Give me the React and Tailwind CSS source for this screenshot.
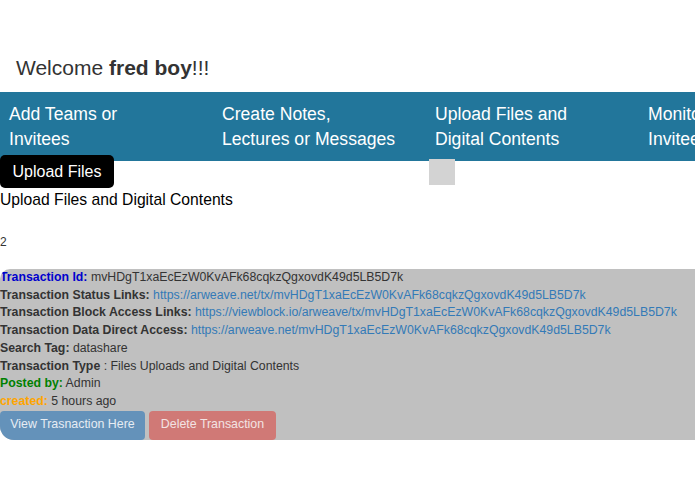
const tx = 'mvHDgT1xaEcEzW0KvAFk68cqkzQgxovdK49d5LB5D7k';

const navItems = [
  ['Add Teams or', 'Invitees'],
  ['Create Notes,', 'Lectures or Messages'],
  ['Upload Files and', 'Digital Contents'],
  ['Monitor', 'Invitees'],
];

export default function App() {
  return (
    <div className="min-h-screen overflow-hidden bg-white text-[#333] font-['Liberation_Sans',Arial,sans-serif]">
      <h1 className="pl-4 pt-[54px] pb-[10px] text-[21px] leading-[28px]">
        Welcome <b>fred boy</b>!!!
      </h1>

      <nav className="flex bg-[#22769b] py-[10px] text-[17.6px] leading-[24.5px] text-white whitespace-nowrap">
        {navItems.map(([a, b]) => (
          <div key={a} className="w-[213px] shrink-0 pl-[9px]">
            <div>{a}</div>
            <div>{b}</div>
          </div>
        ))}
      </nav>

      <div className="-mt-[6px] flex items-center">
        <button className="h-[33px] w-[114px] rounded-[5px] bg-black text-[16px] text-white">Upload Files</button>
        <div className="ml-[315px] h-[26px] w-[26px] bg-[#d3d3d3]" />
      </div>

      <p className="mt-[2px] text-[15.7px] leading-[20px] text-black">Upload Files and Digital Contents</p>

      <p className="mt-[24px] text-[12px] leading-[16px]">2</p>

      <div className="mt-[19px] w-[720px] overflow-hidden rounded-tl-[10px] rounded-bl-[14px] bg-[#c0c0c0] text-[12.3px] leading-[17.7px] text-[#333]">
        <div><b className="text-[#0000cd]">Transaction Id:</b> {tx}</div>
        <div><b>Transaction Status Links:</b> <a className="text-[#337ab7]">https://arweave.net/tx/{tx}</a></div>
        <div><b>Transaction Block Access Links:</b> <a className="text-[#337ab7]">https://viewblock.io/arweave/tx/{tx}</a></div>
        <div><b>Transaction Data Direct Access:</b> <a className="text-[#337ab7]">https://arweave.net/{tx}</a></div>
        <div><b>Search Tag:</b> datashare</div>
        <div><b>Transaction Type</b> : Files Uploads and Digital Contents</div>
        <div><b className="text-[#008000]">Posted by:</b> Admin</div>
        <div><b className="text-[#ffa500]">created:</b> 5 hours ago</div>
        <div className="flex gap-1">
          <button className="h-[29px] w-[145px] rounded-[4px] bg-[#6492ba] text-[12.4px] text-[#e6ecf3]">View Trasnaction Here</button>
          <button className="h-[29px] w-[127px] rounded-[4px] bg-[#d07976] text-[12.4px] text-[#f3e3e3]">Delete Transaction</button>
        </div>
      </div>
    </div>
  );
}
